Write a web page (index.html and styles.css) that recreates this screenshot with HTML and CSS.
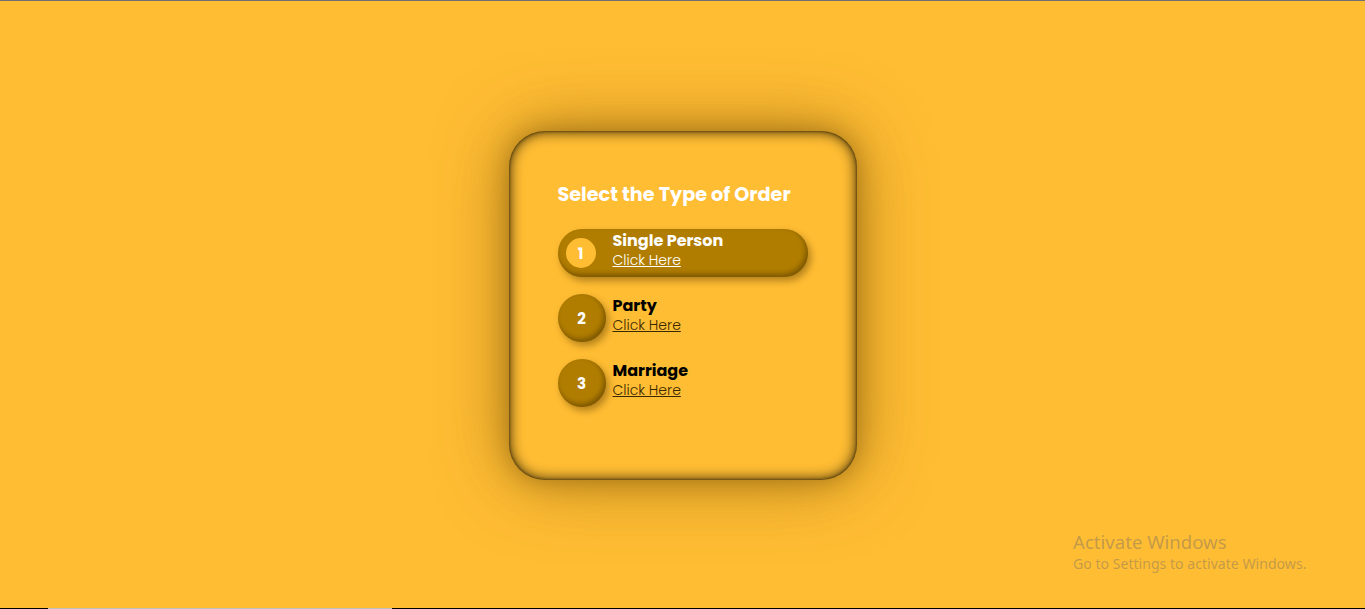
FILE: index.html
```html
<!DOCTYPE html>
<html lang="en">
<head>
<meta charset="utf-8">
<title>Select the Type of Order</title>
<link rel="stylesheet" href="styles.css">
</head>
<body>
<div class="topline"></div>
<main class="stage">
  <section class="card">
    <h1 class="title">Select the Type of Order</h1>
    <ul class="options">
      <li class="option active">
        <span class="num">1</span>
        <div class="label">
          <span class="name">Single Person</span>
          <a class="link" href="#">Click Here</a>
        </div>
      </li>
      <li class="option">
        <span class="num">2</span>
        <div class="label">
          <span class="name">Party</span>
          <a class="link" href="#">Click Here</a>
        </div>
      </li>
      <li class="option">
        <span class="num">3</span>
        <div class="label">
          <span class="name">Marriage</span>
          <a class="link" href="#">Click Here</a>
        </div>
      </li>
    </ul>
  </section>
</main>
<div class="watermark">
  <div class="wm-title">Activate Windows</div>
  <div class="wm-sub">Go to Settings to activate Windows.</div>
</div>
<div class="bottombar"><span class="bb-a"></span><span class="bb-b"></span><span class="bb-c"></span></div>
</body>
</html>
```
FILE: styles.css
```css
* { box-sizing: border-box; }
html, body { margin: 0; padding: 0; height: 100%; }
body {
  background: #ffbd33;
  font-family: "Poppins", "Inter", "Noto Sans", sans-serif;
  overflow: hidden;
  position: relative;
}
.topline { height: 1px; background: #707070; }
.stage {
  height: 607px;
  display: flex;
  align-items: center;
  justify-content: center;
}
.card {
  width: 348px;
  height: 349px;
  border-radius: 36px;
  background: #ffbd33;
  padding: 52px 49px;
  box-shadow:
    inset 0 0 14px rgba(30, 20, 0, 0.95),
    inset 0 0 3px rgba(30, 20, 0, 0.8),
    0 0 25px rgba(100, 65, 0, 0.4),
    0 0 70px rgba(100, 65, 0, 0.5);
  margin-top: 2px;
}
.title {
  margin: 0 0 22px;
  color: #fff;
  font-size: 19.2px;
  font-weight: 700;
  line-height: 24px;
}
.options { list-style: none; margin: 0; padding: 0; display: flex; flex-direction: column; gap: 17px; }
.option {
  display: flex;
  align-items: center;
  gap: 7px;
  height: 48px;
  width: 250px;
  border-radius: 24px;
}
.option.active {
  background: #b07d00;
  box-shadow: inset -2px -3px 5px rgba(60, 40, 0, 0.45), 3px 4px 7px rgba(90, 60, 0, 0.45);
  padding-left: 8px;
  gap: 17px;
}
.num {
  flex: none;
  width: 48px;
  height: 48px;
  border-radius: 50%;
  background: #b07d00;
  color: #fff;
  font-weight: 700;
  font-size: 15px;
  display: flex;
  align-items: center;
  justify-content: center;
  box-shadow: inset -2px -3px 5px rgba(60, 40, 0, 0.45), 3px 4px 7px rgba(90, 60, 0, 0.45);
}
.option.active .num {
  width: 30px;
  height: 30px;
  background: #ffbd33;
  box-shadow: none;
}
.label { display: flex; flex-direction: column; margin-top: -6px; }
.name { font-size: 16px; font-weight: 700; color: #000; line-height: 20px; }
.link { font-size: 14px; font-weight: 300; color: #3a2800; line-height: 18px; text-decoration: underline; }
.active .name, .active .link { color: #fff; }
.watermark {
  position: absolute;
  left: 1073px;
  top: 530px;
  color: rgba(120, 110, 100, 0.45);
  font-family: "Segoe UI", "Noto Sans", sans-serif;
}
.wm-title { font-size: 18.6px; line-height: 24px; }
.wm-sub { font-size: 14.1px; line-height: 18px; margin-top: 1px; }
.bottombar { position: absolute; left: 0; right: 0; bottom: 0; height: 1px; display: flex; }
.bb-a { width: 48px; background: #000; }
.bb-b { width: 344px; background: #c0c0c0; }
.bb-c { flex: 1; background: #000; }
```
